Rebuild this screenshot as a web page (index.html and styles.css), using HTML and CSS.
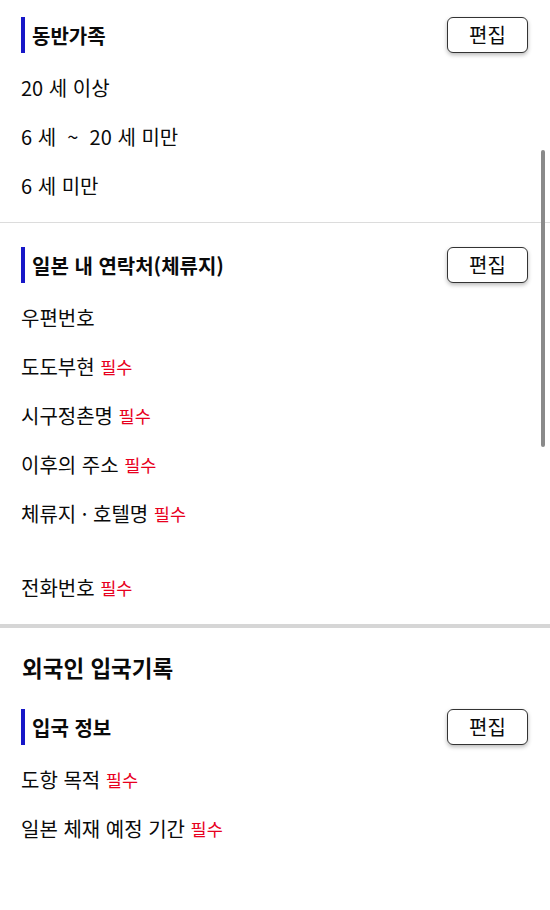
FILE: index.html
```html
<!DOCTYPE html>
<html lang="ko">
<head>
<meta charset="utf-8">
<link rel="stylesheet" href="styles.css">
</head>
<body>
<div class="page">
  <section class="section">
    <div class="sec-head">
      <h2 class="sec-title">동반가족</h2>
      <button class="edit-btn">편집</button>
    </div>
    <ul class="items">
      <li class="item">20 세 이상</li>
      <li class="item">6 세  ~  20 세 미만</li>
      <li class="item">6 세 미만</li>
    </ul>
  </section>
  <hr class="divider">
  <section class="section">
    <div class="sec-head">
      <h2 class="sec-title">일본 내 연락처(체류지)</h2>
      <button class="edit-btn">편집</button>
    </div>
    <ul class="items">
      <li class="item">우편번호</li>
      <li class="item">도도부현 <span class="req">필수</span></li>
      <li class="item">시구정촌명 <span class="req">필수</span></li>
      <li class="item">이후의 주소 <span class="req">필수</span></li>
      <li class="item item-tall">체류지 · 호텔명 <span class="req">필수</span></li>
      <li class="item">전화번호 <span class="req">필수</span></li>
    </ul>
  </section>
  <hr class="divider divider-thick">
  <section class="section section-group">
    <h1 class="group-title">외국인 입국기록</h1>
    <div class="sec-head sub-head">
      <h2 class="sec-title">입국 정보</h2>
      <button class="edit-btn">편집</button>
    </div>
    <ul class="items">
      <li class="item">도항 목적 <span class="req">필수</span></li>
      <li class="item">일본 체재 예정 기간 <span class="req">필수</span></li>
    </ul>
  </section>
</div>
<div class="scrollbar"></div>
</body>
</html>
```
FILE: styles.css
```css
html, body {
  margin: 0;
  padding: 0;
  background: #fff;
}
body {
  font-family: "Noto Sans CJK KR", "Noto Sans", sans-serif;
  color: #0a0a0a;
  width: 550px;
  height: 910px;
  overflow: hidden;
}
.page {
  display: flex;
  flex-direction: column;
}
.section {
  padding: 17px 22px 12px 21px;
}
.section + .divider + .section {
  padding-top: 24px;
}
.sec-head {
  display: flex;
  align-items: center;
  justify-content: space-between;
  height: 36px;
}
.sec-title {
  margin: 0;
  height: 36px;
  display: flex;
  align-items: center;
  border-left: 4px solid #1717c8;
  padding-left: 7px;
  font-size: 20px;
  font-weight: 700;
  color: #0a0a0a;
}
.edit-btn {
  width: 81px;
  height: 36px;
  border: 1px solid #333;
  border-radius: 6px;
  background: #fff;
  box-shadow: 0 2px 4px rgba(0,0,0,0.28);
  font-family: inherit;
  font-size: 20px;
  color: #0a0a0a;
  padding: 0;
  line-height: 1;
}
.items {
  list-style: none;
  margin: 10px 0 0 0;
  padding: 0;
}
.item {
  height: 49px;
  display: flex;
  align-items: center;
  font-size: 20px;
  white-space: pre;
  padding-bottom: 1px;
  box-sizing: border-box;
}
.item-tall {
  margin-bottom: 25px;
}
.req {
  color: #e8001e;
  font-size: 17.5px;
}
.divider {
  margin: 0;
  border: 0;
  height: 1px;
  background: #dcdcdc;
}
.divider-thick {
  height: 4px;
  background: #d6d6d6;
}
.section-group {
  padding-top: 24px;
}
.group-title {
  margin: 0;
  font-size: 22.5px;
  font-weight: 700;
  line-height: 30px;
  color: #0a0a0a;
  padding-left: 1px;
}
.sub-head {
  margin-top: 27px;
}
.scrollbar {
  position: absolute;
  left: 541px;
  top: 150px;
  width: 4px;
  height: 297px;
  border-radius: 2px;
  background: #8a8a8a;
}
```
